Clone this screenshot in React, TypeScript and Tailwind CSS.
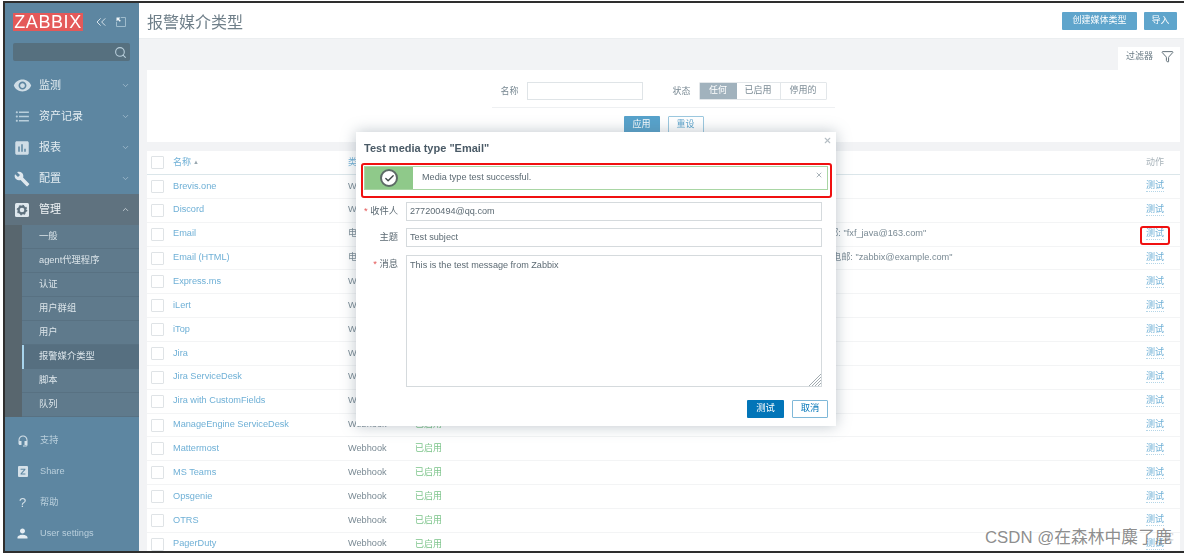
import React from "react";
import { ChevronDown, ChevronUp, ChevronsLeft, Search, Filter, Check, X } from "lucide-react";
import { MdRemoveRedEye, MdFormatListBulleted, MdAssessment, MdBuild, MdPerson, MdHeadsetMic } from "react-icons/md";

const FONT = "font-['Liberation_Sans','Noto_Sans_CJK_SC',sans-serif]";

function CogBox() {
  return (
    <svg width="14" height="14" viewBox="0 0 14 14">
      <rect x="0" y="0" width="14" height="14" rx="1.5" fill="#dfe8ee" />
      <circle cx="7" cy="7" r="3.4" fill="none" stroke="#5f727f" strokeWidth="2.2" />
      <circle cx="7" cy="7" r="4.6" fill="none" stroke="#5f727f" strokeWidth="1.4" strokeDasharray="1.6 2" />
    </svg>
  );
}

function ZBox() {
  return (
    <svg width="10" height="11" viewBox="0 0 10 11">
      <rect width="10" height="11" rx="1" fill="#d5e1e9" />
      <path d="M2.6 2.8h4.8v1L3.9 7.4h3.5v1H2.6v-1L6 3.8H2.6z" fill="#5d86a1" />
    </svg>
  );
}

function ShrinkIcon() {
  return (
    <svg width="10" height="10" viewBox="0 0 10 10" fill="none">
      <path d="M5 .5h4.500V9.500H.5V5" stroke="#9fbccd" strokeWidth="1" />
      <path d="M.5.5h4L3 2l1.800 1.800-1 1L2 3 .5 4.500z" fill="#f0f5f8" />
    </svg>
  );
}

const mainNav = [
  { label: "监测", icon: <MdRemoveRedEye size={19} className="text-[#cfdde6]" /> },
  { label: "资产记录", icon: <MdFormatListBulleted size={17} className="text-[#b9cfdc]" /> },
  { label: "报表", icon: <MdAssessment size={18} className="text-[#cfdde6]" /> },
  { label: "配置", icon: <MdBuild size={16} className="text-[#dfe8ee]" /> },
];

const subNav = ["一般", "agent代理程序", "认证", "用户群组", "用户", "报警媒介类型", "脚本", "队列"];

const bottomNav = [
  { label: "支持", icon: <MdHeadsetMic size={12} className="text-[#d5e1e9]" /> },
  { label: "Share", icon: <ZBox /> },
  { label: "帮助", icon: <span className="text-[13px] leading-none text-[#d5e1e9]">?</span> },
  { label: "User settings", icon: <MdPerson size={15} className="text-[#e6eef3]" /> },
];

const rows = [
  { name: "Brevis.one", type: "Webhook", status: "已启用" },
  { name: "Discord", type: "Webhook", status: "已启用" },
  { name: "Email", type: "电子邮件", status: "已启用", detail: "电邮: \"fxf_java@163.com\"", pad: "pl-[375px]" },
  { name: "Email (HTML)", type: "电子邮件", status: "已启用", detail: "电邮: \"zabbix@example.com\"", pad: "pl-[387px]" },
  { name: "Express.ms", type: "Webhook", status: "已启用" },
  { name: "iLert", type: "Webhook", status: "已启用" },
  { name: "iTop", type: "Webhook", status: "已启用" },
  { name: "Jira", type: "Webhook", status: "已启用" },
  { name: "Jira ServiceDesk", type: "Webhook", status: "已启用" },
  { name: "Jira with CustomFields", type: "Webhook", status: "已启用" },
  { name: "ManageEngine ServiceDesk", type: "Webhook", status: "已启用" },
  { name: "Mattermost", type: "Webhook", status: "已启用" },
  { name: "MS Teams", type: "Webhook", status: "已启用" },
  { name: "Opsgenie", type: "Webhook", status: "已启用" },
  { name: "OTRS", type: "Webhook", status: "已启用" },
  { name: "PagerDuty", type: "Webhook", status: "已启用" },
];

function Sidebar() {
  return (
    <aside className="w-[134px] shrink-0 bg-[#5d86a1] flex flex-col">
      <div className="flex items-center pl-[8px] pt-[10px]">
        <div className="w-[70px] h-[18px] bg-[#e45959] text-white text-[18px] leading-[18px] text-center tracking-[0.6px]">ZABBIX</div>
        <ChevronsLeft size={16} strokeWidth={1.5} className="ml-[10px] text-[#d5e1e9]" />
        <span className="ml-[7px]"><ShrinkIcon /></span>
      </div>
      <div className="ml-[8px] mt-[12px] w-[117px] h-[18px] rounded-[2px] bg-[#56707f] flex items-center justify-end pr-[3px]">
        <Search size={13} className="text-[#b9cfdc]" />
      </div>
      <nav className="mt-[9px] flex flex-col">
        {mainNav.map((n) => (
          <div key={n.label} className="h-[31px] flex items-center relative text-[#e3ecf1] text-[11px]">
            <span className="w-[34px] flex justify-center">{n.icon}</span>
            <span>{n.label}</span>
            <ChevronDown size={9} className="ml-auto mr-[9px] text-[#a9c2d2]" />
          </div>
        ))}
        <div className="h-[31px] bg-[#5f727f] flex items-center text-[#f0f4f6] text-[11px]">
          <span className="w-[34px] flex justify-center"><CogBox /></span>
          <span>管理</span>
          <ChevronUp size={9} className="ml-auto mr-[9px] text-[#d5dde2]" />
        </div>
        <div className="bg-[#58666e] pl-[17px]">
          {subNav.map((s) => (
            <div
              key={s}
              className={
                s === "报警媒介类型"
                  ? "h-[24px] flex items-center pl-[15px] text-[9.3px] text-[#dce5ea] bg-[#566f80] border-l-[2px] border-[#a8d4ec]"
                  : "h-[24px] flex items-center pl-[17px] text-[9.3px] text-[#dce5ea] bg-[#5f7a8c] border-b border-[#587182]"
              }
            >
              {s}
            </div>
          ))}
        </div>
      </nav>
      <div className="mt-[8px] flex flex-col">
        {bottomNav.map((b) => (
          <div key={b.label} className="h-[31px] flex items-center text-[9.2px] text-[#b9cfdc]">
            <span className="w-[35px] flex justify-center">{b.icon}</span>
            <span>{b.label}</span>
          </div>
        ))}
      </div>
    </aside>
  );
}

function FilterPanel() {
  return (
    <>
      <div className="shrink-0 flex justify-end pt-[8px] pr-[4px]">
        <div className="w-[62px] h-[23px] bg-white flex items-center pl-[8px] pb-[4px] text-[9px] text-[#6b7c86]">
          <span>过滤器</span>
          <Filter size={13} strokeWidth={1.8} className="ml-[8px] text-[#5d6c75]" />
        </div>
      </div>
      <div className="shrink-0 ml-[8px] mr-[4px] h-[72px] bg-white flex flex-col items-center">
        <div className="mt-[12px] flex items-center text-[9px] text-[#7a8a94]">
          <span className="pt-[1px]">名称</span>
          <span className="ml-[8px] w-[116px] h-[18px] border border-[#dfe4e7] bg-white" />
          <span className="ml-[30px] pt-[1px]">状态</span>
          <div className="ml-[8px] flex h-[18px] border border-[#e3e7ea] rounded-[1px]">
            <span className="w-[37px] bg-[#a1b2bd] text-white flex items-center justify-center">任何</span>
            <span className="w-[44px] flex items-center justify-center border-r border-[#e3e7ea]">已启用</span>
            <span className="w-[45px] flex items-center justify-center">停用的</span>
          </div>
        </div>
        <div className="mt-[7px] w-[343px] h-px bg-[#eef0f2]" />
        <div className="mt-[8px] flex gap-[8px] text-[9px]">
          <span className="w-[36px] h-[18px] bg-[#57a2cb] text-white rounded-[1px] flex items-center justify-center">应用</span>
          <span className="w-[36px] h-[18px] border border-[#9cc8df] text-[#5fa5cc] rounded-[1px] flex items-center justify-center">重设</span>
        </div>
      </div>
    </>
  );
}

function Table() {
  return (
    <div className="shrink-0 mt-[9px] ml-[8px] mr-[4px] bg-white">
      <div className="h-[24px] flex items-center border-b border-[#dbe6ea] text-[9px]">
        <span className="ml-[4px] w-[13px] h-[13px] border border-[#dfe3e6] rounded-[1px]" />
        <span className="ml-[9px] w-[175px] text-[#6fb0d6] flex items-center gap-[2px]">名称<span className="text-[6px] text-[#9aa8b0]">▲</span></span>
        <span className="text-[#6fb0d6]">类型</span>
        <span className="ml-auto mr-[16px] text-[#a8b3ba]">动作</span>
      </div>
      {rows.map((r) => (
        <div key={r.name} className="h-[23.87px] flex items-center border-b border-[#f3f4f5] text-[9.2px]">
          <span className="ml-[4px] w-[13px] h-[13px] shrink-0 border border-[#dfe3e6] rounded-[1px]" />
          <span className="ml-[9px] w-[175px] shrink-0 text-[#6fb0d6]">{r.name}</span>
          <span className="w-[67px] shrink-0 text-[#7a8a94]">{r.type}</span>
          <span className="w-[30px] shrink-0 text-[#7cc48a] text-[9px]">{r.status}</span>
          {r.detail ? <span className={`${r.pad} text-[#7a8a94] whitespace-nowrap`}>{r.detail}</span> : null}
          <span className="ml-auto mr-[16px] text-[9px] text-[#6fb0d6] border-b border-dotted border-[#b5d6e8] leading-[11px]">测试</span>
        </div>
      ))}
    </div>
  );
}

function Modal() {
  const labelCls = "w-[34px] shrink-0 text-right text-[9.3px] text-[#5c6a73] whitespace-nowrap";
  const inputCls = "ml-[8px] w-[416px] shrink-0 border border-[#d5dadd] pl-[3px] text-[9.1px] text-[#5c6a73] flex";
  return (
    <div className="absolute left-[356px] top-[132px] w-[480px] h-[294px] bg-white shadow-[0_0_14px_rgba(90,110,125,0.4)] pl-[8px] pr-[8px] flex flex-col">
      <X size={9} strokeWidth={3} className="absolute right-[4px] top-[4px] text-[#b5bec4]" />
      <h2 className="mt-[9px] h-[14px] leading-[14px] text-[11px] font-bold text-[#4a5a66]">Test media type "Email"</h2>
      <div className="mt-[11px] w-[464px] h-[24px] border border-[#a9d6a4] flex items-center relative">
        <div className="w-[48px] h-full bg-[#8fc98a] flex items-center justify-center">
          <div className="w-[18px] h-[18px] rounded-full bg-white border-2 border-[#5d6b66] flex items-center justify-center">
            <Check size={11} strokeWidth={3} className="text-[#3f4a48]" />
          </div>
        </div>
        <span className="ml-[9px] text-[9.1px] text-[#5c6a73]">Media type test successful.</span>
        <X size={8} strokeWidth={3} className="absolute right-[4px] top-[4px] text-[#aab4ba]" />
      </div>
      <div className="mt-[12px] flex items-center">
        <span className={labelCls}><span className="text-[#e45959]">* </span>收件人</span>
        <div className={`${inputCls} h-[19px] pt-[1px] items-center`}>277200494@qq.com</div>
      </div>
      <div className="mt-[7px] flex items-center">
        <span className={labelCls}>主题</span>
        <div className={`${inputCls} h-[19px] pt-[1px] items-center`}>Test subject</div>
      </div>
      <div className="mt-[8px] flex items-start">
        <span className={`${labelCls} pt-[3px]`}><span className="text-[#e45959]">* </span>消息</span>
        <div className={`${inputCls} h-[132px] pt-[3px] relative`}>
          This is the test message from Zabbix
          <svg width="12" height="12" viewBox="0 0 12 12" className="absolute right-0 bottom-0" stroke="#8a959c" strokeWidth="0.8">
            <path d="M0 12L12 0M3 12L12 3M6 12L12 6M9 12L12 9" />
          </svg>
        </div>
      </div>
      <div className="mt-[13px] flex justify-end gap-[8px] text-[9.3px]">
        <span className="w-[37px] h-[18px] bg-[#0275b8] text-white rounded-[1px] flex items-center justify-center">测试</span>
        <span className="w-[36px] h-[18px] border border-[#7fb8d8] text-[#0275b8] rounded-[1px] flex items-center justify-center">取消</span>
      </div>
    </div>
  );
}

export default function App() {
  return (
    <div className={`${FONT} relative w-[1184px] h-[555px] overflow-hidden bg-white`}>
      <div className="blur-[0.6px] w-full h-full pt-[1px] pb-[2px] pl-[3px]">
        <div className="h-full flex border-t-2 border-b-2 border-l-2 border-[#2e2e2e] overflow-hidden">
          <Sidebar />
          <main className="flex-1 min-w-0 flex flex-col bg-[#f2f3f5] overflow-hidden">
            <header className="h-[36px] shrink-0 bg-white flex items-center pl-[8px] pr-[7px] border-b border-[#ebeef0]">
              <h1 className="mt-[5px] text-[16px] text-[#6f7f89]">报警媒介类型</h1>
              <span className="ml-auto w-[75px] h-[18px] bg-[#5fa5cc] text-white text-[9px] rounded-[1px] flex items-center justify-center">创建媒体类型</span>
              <span className="ml-[7px] w-[33px] h-[18px] bg-[#5fa5cc] text-white text-[9px] rounded-[1px] flex items-center justify-center">导入</span>
            </header>
            <FilterPanel />
            <Table />
          </main>
        </div>
        <Modal />
        <div className="absolute left-[361px] top-[163px] w-[471px] h-[35px] border-2 border-[#f01010] rounded-[3px]" />
        <div className="absolute left-[1140px] top-[226px] w-[30px] h-[19px] border-2 border-[#f01010] rounded-[3px]" />
      </div>
      <div className="absolute left-[1162px] top-[532px] text-[12px] leading-[14px] text-[#d4d4d4]">客</div>
      <div className="absolute left-[985px] top-[528px] text-[16.8px] leading-[20px] text-[#808080]/90 whitespace-nowrap">CSDN @在森林中麋了鹿</div>
    </div>
  );
}
